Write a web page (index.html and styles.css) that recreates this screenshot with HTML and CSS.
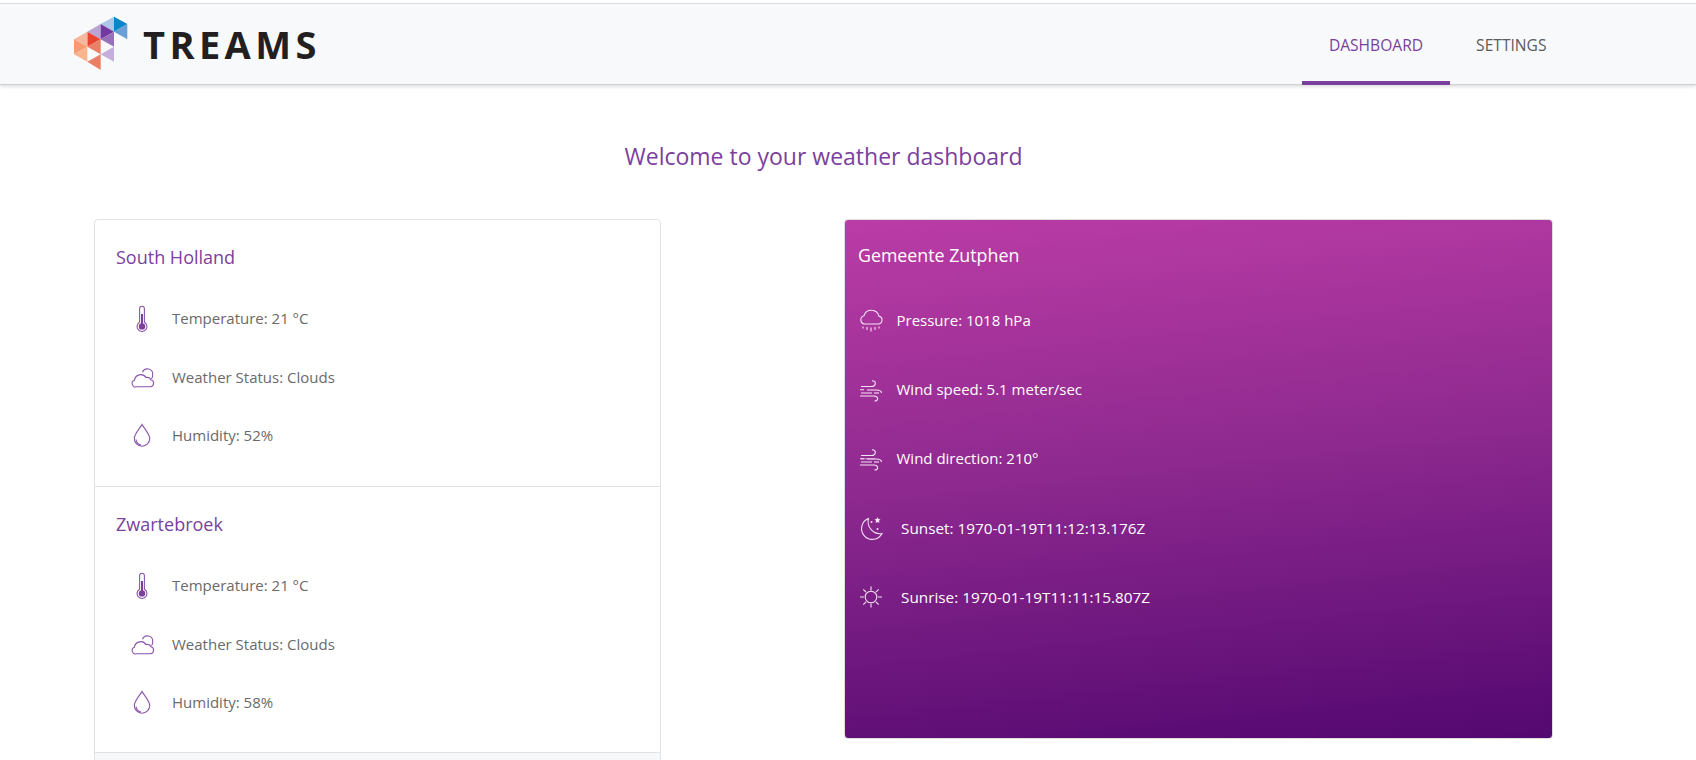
FILE: index.html
```html
<!DOCTYPE html>
<html lang="en">
<head>
    <meta charset="UTF-8">
    <title>Treams - Weather dashboard</title>
    <link rel="stylesheet" href="styles.css">
</head>
<body>
    <header class="navbar">
        <a class="brand" href="#">
            <svg class="brand-mark" viewBox="0 0 210 210" aria-hidden="true">
                <polygon fill="#0a84cc" points="132,20 172,42 132,65"/>
                <polygon fill="#adc6e8" points="132,20 132,65 92,42"/>
                <polygon fill="#6a9fd8" points="172,42 172,88 132,65"/>
                <polygon fill="#b9a3d3" points="92,42 92,88 52,65"/>
                <polygon fill="#73389f" points="92,42 132,65 92,88"/>
                <polygon fill="#9670b8" points="132,65 132,110 92,88"/>
                <polygon fill="#e8442f" points="52,65 92,88 52,110"/>
                <polygon fill="#f4b8a0" points="52,65 52,110 12,88"/>
                <polygon fill="#f99a6c" points="12,88 52,110 12,133"/>
                <polygon fill="#fbb48e" points="52,110 52,155 12,133"/>
                <polygon fill="#ea7f66" points="92,88 92,133 52,110"/>
                <polygon fill="#ea7f66" points="92,133 92,180 52,155"/>
                <polygon fill="#c4aedb" points="132,110 132,155 92,133"/>
            </svg>
            <span class="brand-name">TREAMS</span>
        </a>
        <nav class="nav-links">
            <a class="nav-link active" href="#">DASHBOARD</a>
            <a class="nav-link" href="#">SETTINGS</a>
        </nav>
    </header>

    <main class="container">
        <h2 class="page-title">Welcome to your weather dashboard</h2>
        <div class="columns">
            <section class="location-list">
                <div class="location">
                    <h3 class="location-name">South Holland</h3>
                    <div class="stat">
                        <svg class="icon" viewBox="0 0 28 28"><use href="#i-thermo"/></svg>
                        <span>Temperature: 21 °C</span>
                    </div>
                    <div class="stat">
                        <svg class="icon" viewBox="0 0 28 28"><use href="#i-clouds"/></svg>
                        <span>Weather Status: Clouds</span>
                    </div>
                    <div class="stat">
                        <svg class="icon" viewBox="0 0 28 28"><use href="#i-drop"/></svg>
                        <span>Humidity: 52%</span>
                    </div>
                </div>
                <div class="location">
                    <h3 class="location-name">Zwartebroek</h3>
                    <div class="stat">
                        <svg class="icon" viewBox="0 0 28 28"><use href="#i-thermo"/></svg>
                        <span>Temperature: 21 °C</span>
                    </div>
                    <div class="stat">
                        <svg class="icon" viewBox="0 0 28 28"><use href="#i-clouds"/></svg>
                        <span>Weather Status: Clouds</span>
                    </div>
                    <div class="stat">
                        <svg class="icon" viewBox="0 0 28 28"><use href="#i-drop"/></svg>
                        <span>Humidity: 58%</span>
                    </div>
                </div>
                <div class="location location-more"></div>
            </section>

            <section class="detail-card">
                <h3 class="detail-name">Gemeente Zutphen</h3>
                <div class="detail">
                    <svg class="icon" viewBox="0 0 28 28"><use href="#i-rain"/></svg>
                    <span>Pressure: 1018 hPa</span>
                </div>
                <div class="detail">
                    <svg class="icon" viewBox="0 0 28 28"><use href="#i-wind"/></svg>
                    <span>Wind speed: 5.1 meter/sec</span>
                </div>
                <div class="detail">
                    <svg class="icon" viewBox="0 0 28 28"><use href="#i-wind"/><path class="faint" d="M4 14.800h14"/></svg>
                    <span>Wind direction: 210°</span>
                </div>
                <div class="detail wide">
                    <svg class="icon" viewBox="0 0 28 28"><use href="#i-moon"/></svg>
                    <span>Sunset: 1970-01-19T11:12:13.176Z</span>
                </div>
                <div class="detail wide">
                    <svg class="icon" viewBox="0 0 28 28"><use href="#i-sun"/></svg>
                    <span>Sunrise: 1970-01-19T11:11:15.807Z</span>
                </div>
            </section>
        </div>
    </main>

    <!-- weather icons -->
    <svg class="sprites" aria-hidden="true">
        <symbol id="i-thermo" viewBox="0 0 28 28">
            <path d="M11.600 18.300V4.600a2.400 2.400 0 0 1 4.800 0v13.700a4.900 4.900 0 1 1-4.800 0z"/>
            <circle class="solid" cx="14" cy="22.400" r="3.200"/>
            <path class="solid-line" d="M14 10v11"/>
        </symbol>
        <symbol id="i-clouds" viewBox="0 0 28 28">
            <path d="M8.700 23.700h13.600a3.500 3.500 0 0 0 .6-6.900 3.900 3.900 0 0 0-4.800-2.200 6.400 6.400 0 0 0-11.700 2.700 3.300 3.300 0 0 0 2.300 6.400z"/>
            <path d="M14.500 9.200a5.300 5.300 0 0 1 10.200 2.200 5.300 5.300 0 0 1-1.300 4.200"/>
        </symbol>
        <symbol id="i-drop" viewBox="0 0 28 28">
            <path d="M14 3.500C12.500 6.500 6.300 13 6.300 17.500a7.700 7.700 0 0 0 15.400 0C21.700 13 15.500 6.500 14 3.500z"/>
            <path d="M8 18.500a6.500 6.500 0 0 0 5 5.500"/>
        </symbol>
        <symbol id="i-rain" viewBox="0 0 28 28">
            <path d="M7.500 18H21a4 4 0 0 0 .9-7.900 7.800 7.800 0 0 0-15-.3A4.200 4.200 0 0 0 7.500 18z"/>
            <path d="M6 20.500v2M10 21v3M14 21.500v4M18 21v3M22 20.500v2"/>
        </symbol>
        <symbol id="i-wind" viewBox="0 0 28 28">
            <path d="M4 11.500h10.500c4.500 0 5.500-5.800 .5-5.800"/>
            <path d="M3 14.800h4M10 15h9c3.500 0 5.500 .8 5.500 3"/>
            <path d="M4 18h11M3 21h14c4.500 0 5 5 .5 5"/>
            <path d="M17 18h5"/>
        </symbol>
        <symbol id="i-moon" viewBox="0 0 28 28">
            <path d="M11.500 4.500a10.800 10.800 0 1 0 13.500 15 12 12 0 0 1-13.500-15z"/>
            <path class="solid" d="M20.500 3l.9 2 2.100.3-1.500 1.500.4 2.200-1.900-1-1.900 1 .4-2.200-1.500-1.500 2.100-.3z"/>
            <circle class="solid" cx="14.500" cy="8" r="1"/>
            <circle class="solid" cx="20.500" cy="15" r="1"/>
        </symbol>
        <symbol id="i-sun" viewBox="0 0 28 28">
            <circle cx="14" cy="14" r="5.800"/>
            <path d="M14 3.500v4M14 20.500v4M3 14h4M21 14h4M6.300 6.300l2.800 2.800M18.900 18.900l2.800 2.800M21.700 6.300l-2.800 2.800M9.100 18.900l-2.800 2.800"/>
        </symbol>
    </svg>
</body>
</html>
```

FILE: styles.css
```css
html, body { height: 100%; overflow: hidden; }
body { margin: 0; padding-top: 3px; background-color: #fff; color: #6a6a6a; font-family: "Open Sans", "Noto Sans", sans-serif; box-sizing: border-box; }
a { text-decoration: none; color: inherit; }
h2, h3 { margin: 0; font-weight: 400; }

.navbar { display: flex; justify-content: space-between; height: 80px; padding: 0 123px 0 70px; background-color: #f8f9fb; border-top: 1px solid #dcdcdc; border-bottom: 1px solid #cfcfd4; box-shadow: 0 2px 3px rgba(0,0,0,0.12); }
.brand { display: flex; align-items: center; }
.brand-mark { width: 70px; height: 70px; margin-top: 2px; }
.brand-name { margin-left: 3px; color: #231f20; font-size: 38px; font-weight: 700; letter-spacing: 4.400px; }
.nav-links { display: flex; }
.nav-link { display: flex; align-items: center; padding: 4px 26.500px 0; color: #5c5c5c; font-size: 15.600px; border-bottom: 4px solid transparent; margin-bottom: -1px; }
.nav-link.active { color: #7b3f9e; border-bottom-color: #7b3f9e; }

.container { padding: 0 143px 0 94px; }
.page-title { margin: 55px 0 47px; color: #7b3f9e; font-size: 23px; line-height: 32px; text-align: center; }
.columns { display: flex; justify-content: space-between; align-items: flex-start; }

.location-list { width: 567px; border: 1px solid #e1e3e6; border-radius: 4px; box-sizing: border-box; }
.location { height: 266px; padding: 24px 21px 0; box-sizing: border-box; border-bottom: 1px solid #e1e3e6; }
.location:first-child { height: 267px; }
.location-name { margin-bottom: 19px; color: #7b3f9e; font-size: 18px; line-height: 26px; }
.location-more { background-color: #f7f8fa; border-bottom: 0; }
.stat { display: flex; align-items: center; gap: 16px; height: 58.500px; padding-left: 12px; font-size: 15px; }

.detail-card { width: 709px; height: 520px; padding: 22px 12px; border: 1px solid #ddd; border-radius: 4px; box-sizing: border-box; color: #fff; background: linear-gradient(174deg, #bb3ca6 0%, #8f2a90 45%, #530870 100%); }
.detail-name { margin-bottom: 17px; font-size: 17.800px; line-height: 26px; padding-left: 1px; }
.detail { display: flex; align-items: center; gap: 11.500px; height: 69.300px; font-size: 15px; }
.detail.wide { gap: 16px; font-size: 15.300px; }

.icon { flex: none; width: 28px; height: 28px; fill: none; stroke: #8a55ab; stroke-width: 1.100; overflow: visible; }
.detail .icon { stroke: #f3e4f3; }
.icon .solid, .sprites .solid { fill: currentColor; stroke: none; }
.location .icon { color: #7b3f9e; }
.detail .icon { color: #f3e4f3; }
.sprites .solid-line { stroke-width: 2; stroke: currentColor; }
.faint { opacity: 0.6; }
.sprites { position: absolute; width: 0; height: 0; }
```
